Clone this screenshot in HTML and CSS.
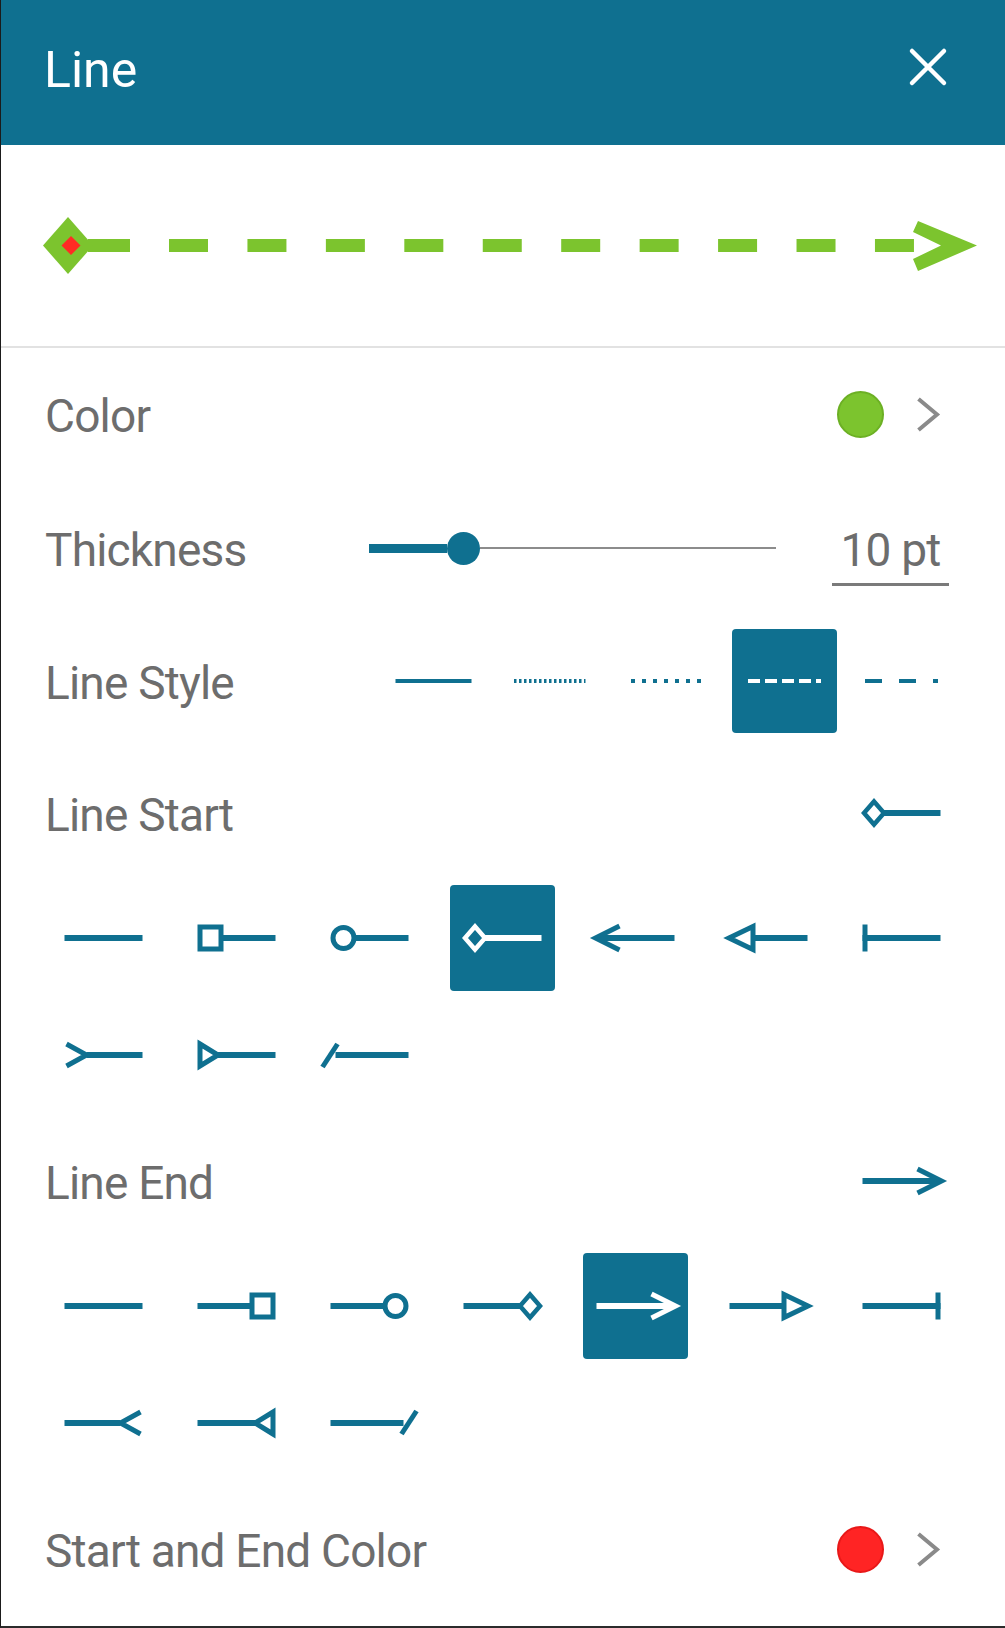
FILE: index.html
```html
<!DOCTYPE html>
<html lang="en">
<head>
<meta charset="utf-8">
<title>Line</title>
<link rel="stylesheet" href="styles.css">
</head>
<body>
<div class="panel">
  <header class="topbar">
    <h1 class="title">Line</h1>
    <button class="close" aria-label="Close">
      <svg viewBox="0 0 48 48" width="48" height="48"><path d="M8 8L40 40M40 8L8 40" stroke="#fff" stroke-width="4.5" stroke-linecap="round" fill="none"/></svg>
    </button>
  </header>

  <div class="preview">
    <svg viewBox="1 145 1004 201" width="1004" height="201">
      <rect x="88" y="239" width="42" height="13" fill="#7cc42e"/>
      <polygon points="68,217 93,245.5 68,274 43,245.5" fill="#7cc42e"/>
      <polygon points="71,236 80.5,245.5 71,255 61.5,245.5" fill="#ff2b24"/>
      <line x1="169" y1="245.5" x2="914" y2="245.5" stroke="#7cc42e" stroke-width="13" stroke-dasharray="39 39.44"/>
      <polygon points="918,221 977,245.5 918,271 913,259 941,245.5 913,232" fill="#7cc42e"/>
    </svg>
  </div>

  <div class="row r-color">
    <span class="label">Color</span>
    <div class="trail">
      <span class="swatch green"></span>
      <svg class="chev" viewBox="0 0 42 40"><polyline points="6.5,5 25,20.5 6.5,36"/></svg>
    </div>
  </div>

  <div class="row r-thick">
    <span class="label">Thickness</span>
    <div class="slider"><span class="fill"></span><span class="thumb"></span><span class="rest"></span></div>
    <span class="value">10 pt</span>
  </div>

  <div class="row r-style">
    <span class="label">Line Style</span>
    <div class="styles">
      <div class="cell scell"><svg class="sico" viewBox="-52.5 -52 105 104"><line x1="-38" x2="38"/></svg></div>
      <div class="cell scell"><svg class="sico" viewBox="-52.5 -52 105 104"><line x1="-36.5" x2="35" stroke-dasharray="2.5 2.5"/></svg></div>
      <div class="cell scell"><svg class="sico" viewBox="-52.5 -52 105 104"><line x1="-36.5" x2="36.5" stroke-dasharray="4 7"/></svg></div>
      <div class="cell scell sel"><svg class="sico" viewBox="-52.5 -52 105 104"><line x1="-36.5" x2="36.5" stroke-dasharray="12 5"/></svg></div>
      <div class="cell scell"><svg class="sico" viewBox="-52.5 -52 105 104"><line x1="-36.5" x2="36.5" stroke-dasharray="17 17"/></svg></div>
    </div>
  </div>

  <div class="row r-head">
    <span class="label">Line Start</span>
    <div class="cell"><svg class="ico" viewBox="-52.5 -53 105 106"><use href="#s-diamond"/></svg></div>
  </div>
  <div class="grid">
    <div class="cell"><svg class="ico" viewBox="-52.5 -53 105 106"><use href="#s-plain"/></svg></div>
    <div class="cell"><svg class="ico" viewBox="-52.5 -53 105 106"><use href="#s-square"/></svg></div>
    <div class="cell"><svg class="ico" viewBox="-52.5 -53 105 106"><use href="#s-circle"/></svg></div>
    <div class="cell sel"><svg class="ico" viewBox="-52.5 -53 105 106"><use href="#s-diamond"/></svg></div>
    <div class="cell"><svg class="ico" viewBox="-52.5 -53 105 106"><use href="#s-arrow"/></svg></div>
    <div class="cell"><svg class="ico" viewBox="-52.5 -53 105 106"><use href="#s-tri"/></svg></div>
    <div class="cell"><svg class="ico" viewBox="-52.5 -53 105 106"><use href="#s-bar"/></svg></div>
    <div class="cell"><svg class="ico" viewBox="-52.5 -53 105 106"><use href="#s-fork"/></svg></div>
    <div class="cell"><svg class="ico" viewBox="-52.5 -53 105 106"><use href="#s-tri2"/></svg></div>
    <div class="cell"><svg class="ico" viewBox="-52.5 -53 105 106"><use href="#s-slash"/></svg></div>
  </div>

  <div class="row r-head">
    <span class="label">Line End</span>
    <div class="cell"><svg class="ico" viewBox="-52.5 -53 105 106"><use href="#s-arrow" transform="rotate(180)"/></svg></div>
  </div>
  <div class="grid">
    <div class="cell"><svg class="ico" viewBox="-52.5 -53 105 106"><use href="#s-plain" transform="rotate(180)"/></svg></div>
    <div class="cell"><svg class="ico" viewBox="-52.5 -53 105 106"><use href="#s-square" transform="rotate(180)"/></svg></div>
    <div class="cell"><svg class="ico" viewBox="-52.5 -53 105 106"><use href="#s-circle" transform="rotate(180)"/></svg></div>
    <div class="cell"><svg class="ico" viewBox="-52.5 -53 105 106"><use href="#s-diamond" transform="rotate(180)"/></svg></div>
    <div class="cell sel"><svg class="ico" viewBox="-52.5 -53 105 106"><use href="#s-arrow" transform="rotate(180)"/></svg></div>
    <div class="cell"><svg class="ico" viewBox="-52.5 -53 105 106"><use href="#s-tri" transform="rotate(180)"/></svg></div>
    <div class="cell"><svg class="ico" viewBox="-52.5 -53 105 106"><use href="#s-bar" transform="rotate(180)"/></svg></div>
    <div class="cell"><svg class="ico" viewBox="-52.5 -53 105 106"><use href="#s-fork" transform="rotate(180)"/></svg></div>
    <div class="cell"><svg class="ico" viewBox="-52.5 -53 105 106"><use href="#s-tri2" transform="rotate(180)"/></svg></div>
    <div class="cell"><svg class="ico" viewBox="-52.5 -53 105 106"><use href="#s-slash" transform="rotate(180)"/></svg></div>
  </div>

  <div class="row r-color r-last">
    <span class="label">Start and End Color</span>
    <div class="trail">
      <span class="swatch red"></span>
      <svg class="chev" viewBox="0 0 42 40"><polyline points="6.5,5 25,20.5 6.5,36"/></svg>
    </div>
  </div>
</div>

<svg class="defs" width="0" height="0" aria-hidden="true">
  <defs>
    <g id="s-plain"><path d="M-39 0H39" stroke-width="6"/></g>
    <g id="s-square"><rect x="-36.5" y="-11" width="21" height="22"/><path d="M-15.5 0H39" stroke-width="6"/></g>
    <g id="s-circle"><circle cx="-26" cy="0" r="10.5"/><path d="M-15.5 0H39" stroke-width="6"/></g>
    <g id="s-diamond"><path d="M-37.5 0L-27.5 -11.5L-17.5 0L-27.5 11.5Z" stroke-width="4.5"/><path d="M-17.5 0H39" stroke-width="6"/></g>
    <g id="s-arrow"><path d="M-16 -12L-40 0L-16 12"/><path d="M-38 0H39" stroke-width="6"/></g>
    <g id="s-tri"><path d="M-39.5 0L-15.5 -11.5V11.5Z"/><path d="M-15.5 0H39" stroke-width="6"/></g>
    <g id="s-bar"><path d="M-36.5 -13.5V13.5"/><path d="M-39 0H39" stroke-width="6"/></g>
    <g id="s-fork"><path d="M-37 -11L-17 0L-37 11"/><path d="M-17 0H39" stroke-width="6"/></g>
    <g id="s-tri2"><path d="M-36.5 -11L-18.5 0L-36.5 11Z"/><path d="M-18.5 0H39" stroke-width="6"/></g>
    <g id="s-slash"><path d="M-47 12L-32 -11"/><path d="M-34 0H39" stroke-width="6"/></g>
  </defs>
</svg>
</body>
</html>
```

FILE: styles.css
```css
* {
  box-sizing: border-box;
  margin: 0;
  padding: 0;
}

body {
  margin: 0;
  background: #ffffff;
  font-family: Roboto, "Noto Sans", Arial, sans-serif;
  color: #6d6d6d;
}

.panel {
  width: 1005px;
  height: 1628px;
  border-left: 1px solid #1b1b1b;
  border-bottom: 2px solid #2b2b2b;
  overflow: hidden;
  background: #ffffff;
}

.topbar {
  height: 145px;
  background: #0f7090;
  display: flex;
  justify-content: space-between;
  align-items: flex-start;
  padding: 43px 53px 0 43px;
}

.title {
  font-size: 50px;
  line-height: 50px;
  font-weight: 400;
  color: #ffffff;
  margin-top: 2px;
}

.close {
  width: 48px;
  height: 48px;
  border: 0;
  background: none;
  display: block;
}

.close svg {
  display: block;
}

.preview {
  height: 203px;
  border-bottom: 2px solid #e2e2e2;
}

.preview svg {
  display: block;
}

.row {
  display: flex;
  align-items: center;
  justify-content: space-between;
  padding: 0 51px 0 44px;
}

.label {
  font-size: 46px;
  line-height: 46px;
  padding-top: 4px;
  letter-spacing: -0.8px;
  color: #6d6d6d;
  white-space: nowrap;
}

.r-color {
  height: 132px;
}

.r-last {
  height: 134px;
}

.trail {
  display: flex;
  align-items: center;
  gap: 28px;
}

.swatch {
  display: block;
  width: 47px;
  height: 47px;
  border-radius: 50%;
}

.swatch.green {
  background: #7cc42e;
  border: 2px solid #6cb024;
}

.swatch.red {
  background: #ff2424;
  border: 2px solid #e81818;
}

.chev {
  display: block;
  width: 42px;
  height: 40px;
  fill: none;
  stroke: #8a8a8a;
  stroke-width: 4;
}

.r-thick {
  height: 136px;
  justify-content: flex-start;
}

.r-thick .label {
  width: 324px;
  flex: none;
}

.slider {
  width: 407px;
  height: 33px;
  display: flex;
  align-items: center;
  flex: none;
}

.fill {
  display: block;
  width: 78px;
  height: 9px;
  background: #0f7090;
}

.thumb {
  display: block;
  width: 33px;
  height: 33px;
  border-radius: 50%;
  background: #0f7090;
  margin-left: -0.5px;
}

.rest {
  display: block;
  flex: 1;
  height: 2px;
  background: #8c8c8c;
}

.value {
  margin-left: 56px;
  width: 117px;
  text-align: center;
  font-size: 46px;
  line-height: 46px;
  letter-spacing: -0.8px;
  padding: 16px 0 10px;
  border-bottom: 3px solid #7a7a7a;
  color: #6d6d6d;
}

.r-style {
  height: 130px;
}

.styles {
  display: flex;
  gap: 12px;
}

.r-head {
  height: 134px;
}

.grid {
  display: grid;
  grid-template-columns: repeat(7, 105px);
  grid-auto-rows: 106px;
  column-gap: 28px;
  row-gap: 11px;
  justify-content: end;
  padding: 5px 51px 6px 44px;
}

.cell {
  width: 105px;
  height: 106px;
  display: flex;
  align-items: center;
  justify-content: center;
  border-radius: 4px;
  color: #0f7090;
}

.cell.scell {
  height: 104px;
}

.cell.sel {
  background: #0f7090;
  color: #ffffff;
}

.ico {
  display: block;
  width: 105px;
  height: 106px;
  fill: none;
  stroke: currentColor;
  stroke-width: 5;
}

.sico {
  display: block;
  width: 105px;
  height: 104px;
  fill: none;
  stroke: currentColor;
  stroke-width: 4;
}

.defs {
  display: block;
  width: 0;
  height: 0;
  overflow: hidden;
}
```
